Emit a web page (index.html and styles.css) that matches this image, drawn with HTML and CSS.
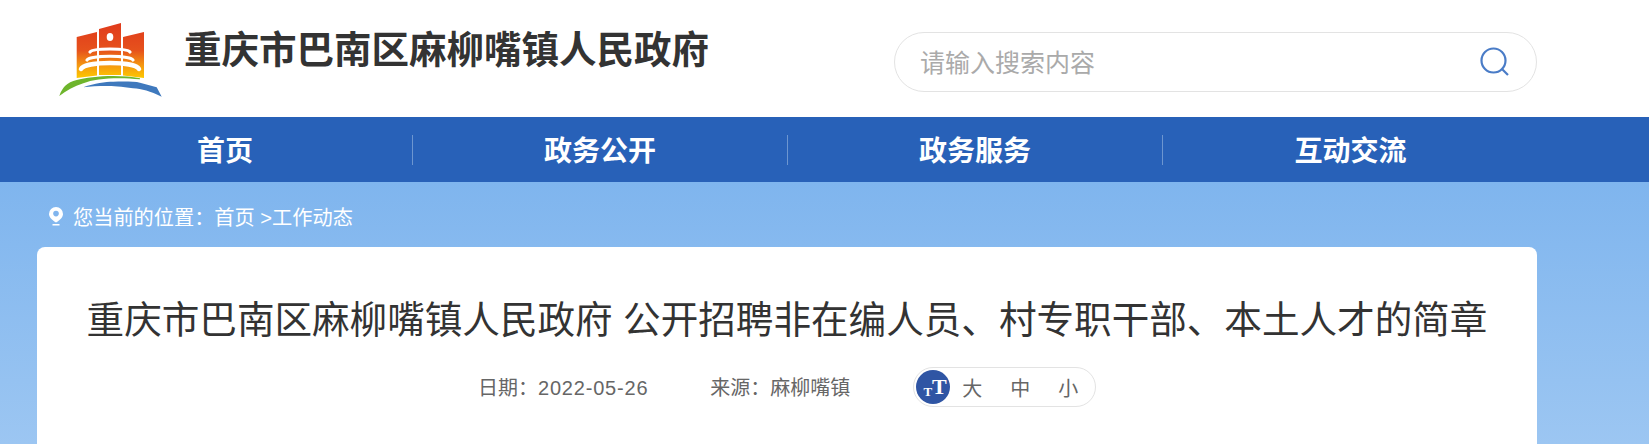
FILE: index.html
```html
<!DOCTYPE html>
<html lang="zh-CN">
<head>
  <meta charset="UTF-8">
  <title>重庆市巴南区麻柳嘴镇人民政府</title>
  <link rel="stylesheet" href="styles.css">
</head>
<body>
  <header class="header">
    <div class="brand">
      <svg class="logo" width="110" height="80" viewBox="56 20 110 80">
        <defs>
          <linearGradient id="flag" x1="0" y1="0" x2="0" y2="1">
            <stop offset="0" stop-color="#e03a1c"/>
            <stop offset="0.5" stop-color="#e6521c"/>
            <stop offset="0.78" stop-color="#f59a10"/>
            <stop offset="1" stop-color="#fdc800"/>
          </linearGradient>
        </defs>
        <path d="M76.700 37L97 32V75.500L76.700 78Z M99 29L121 23V75H99Z M123 37L144 32V78L123 75.500Z" fill="url(#flag)"/>
        <ellipse cx="110" cy="37" rx="3.300" ry="4" fill="#fff"/>
        <path d="M90 52C93 48 127 48 130 52" fill="none" stroke="#fff" stroke-width="3.200" stroke-linecap="round"/>
        <path d="M87 60C90 55 130 55 133 60" fill="none" stroke="#fff" stroke-width="3.200" stroke-linecap="round"/>
        <path d="M81 69C85 61 135 61 139 69" fill="none" stroke="#fff" stroke-width="4.500" stroke-linecap="round"/>
        <path d="M59.300 96C61 91 63 88 65 86C68 83 72 81 76.700 80C90 76 120 74 140 78.300V79.300C120 77 95 78 83.300 83.300C74 86 66 91 59.300 96Z" fill="#6eb52c"/>
        <path d="M83.300 87.300C95 83 105 81.700 113.300 81.700C125 81.500 135 81.500 140 82.700L156.700 87.300L161.700 96.700C150 91 142 89 133 88.300C122 86.500 112 86 106.700 86C98 86 90 86.500 83.300 87.300Z" fill="#3f79bd"/>
      </svg>
      <h1 class="site-name">重庆市巴南区麻柳嘴镇人民政府</h1>
    </div>
    <div class="search">
      <span class="search-hint">请输入搜索内容</span>
      <svg width="30" height="30" viewBox="0 0 30 30">
        <circle cx="13.500" cy="13.500" r="12" fill="none" stroke="#4a7cc7" stroke-width="2.200"/>
        <path d="M22 22L28 28" stroke="#4a7cc7" stroke-width="2.200"/>
      </svg>
    </div>
  </header>

  <nav class="nav">
    <a class="nav-item">首页</a>
    <a class="nav-item">政务公开</a>
    <a class="nav-item">政务服务</a>
    <a class="nav-item">互动交流</a>
  </nav>

  <main class="content">
    <div class="crumb">
      <svg width="16" height="20" viewBox="0 0 16 20">
        <path d="M8 1a7 7 0 0 1 7 7c0 3.500-3.500 6.500-7 8.500C4.500 14.500 1 11.500 1 8a7 7 0 0 1 7-7Z" fill="#fff"/>
        <circle cx="8" cy="7.600" r="2.800" fill="#80b5ee"/>
        <rect x="4.500" y="18" width="7" height="1.500" fill="#fff"/>
      </svg>
      <span>您当前的位置：首页 &gt;工作动态</span>
    </div>
    <article class="card">
      <h2 class="title">重庆市巴南区麻柳嘴镇人民政府 公开招聘非在编人员、村专职干部、本土人才的简章</h2>
      <div class="meta">
        <span class="meta-date">日期：<span class="meta-num">2022-05-26</span></span>
        <span class="meta-source">来源：麻柳嘴镇</span>
        <div class="font-size">
          <span class="font-icon">
            <svg width="34" height="34" viewBox="0 0 34 34">
              <circle cx="17" cy="17" r="17" fill="#2f55a4"/>
              <text x="7.500" y="25.500" class="font-icon-small">T</text>
              <text x="16" y="24" class="font-icon-big">T</text>
            </svg>
          </span>
          <span>大</span>
          <span>中</span>
          <span>小</span>
        </div>
      </div>
    </article>
  </main>
</body>
</html>
```

FILE: styles.css
```css
* {
  box-sizing: border-box;
}
html, body {
  height: 444px;
  overflow: hidden;
}
body {
  margin: 0;
  font-family: "Liberation Sans", "Noto Sans CJK SC", sans-serif;
  background: #fff;
}
.header {
  height: 117px;
  padding: 32px 112px 0 56px;
  display: flex;
  justify-content: space-between;
  align-items: flex-start;
}
.brand {
  display: flex;
  align-items: flex-start;
  gap: 18px;
}
.logo {
  margin-top: -12px;
}
.site-name {
  margin: -7px 0 0;
  font-size: 37.500px;
  line-height: 50px;
  font-weight: bold;
  color: #333;
}
.search {
  width: 643px;
  height: 60px;
  border: 1px solid #e3e3e3;
  border-radius: 30px;
  padding: 0 26px 0 25px;
  display: flex;
  align-items: center;
  justify-content: space-between;
}
.search-hint {
  font-size: 25px;
  line-height: 30px;
  margin-top: 2px;
  color: #aaa;
}
.nav {
  height: 65px;
  background: #2861b8;
  display: flex;
  align-items: center;
  padding: 0 38px;
}
.nav-item {
  width: 375px;
  text-align: center;
  color: #fff;
  font-size: 28px;
  font-weight: bold;
  line-height: 27px;
  padding-top: 3px;
  border-right: 1px solid #6d96d0;
}
.nav-item:last-child {
  border-right: none;
}
.content {
  height: 262px;
  padding: 0 112px 0 37px;
  background: linear-gradient(to bottom, #7fb5ee, #9cc6f2);
}
.crumb {
  height: 65px;
  padding: 3px 0 0 11px;
  display: flex;
  align-items: center;
  gap: 9px;
  color: #fff;
  font-size: 20.200px;
}
.card {
  background: #fff;
  border-radius: 8px 8px 0 0;
  height: 197px;
  padding-top: 47px;
}
.title {
  margin: 0;
  text-align: center;
  font-size: 37.600px;
  line-height: 52px;
  font-weight: normal;
  color: #333;
}
.meta {
  margin-top: 20px;
  display: flex;
  align-items: center;
  padding-left: 441px;
  font-size: 20px;
  color: #666;
}
.meta-num {
  letter-spacing: 0.800px;
}
.meta-source {
  margin-left: 62px;
}
.font-size {
  margin-left: 63px;
  margin-top: 1px;
  width: 183px;
  height: 40px;
  border: 1px solid #e3e3e3;
  border-radius: 20px;
  padding-left: 2px;
  display: flex;
  align-items: center;
  gap: 28px;
}
.font-icon {
  width: 34px;
  height: 34px;
  margin-right: -16px;
}
.font-icon-small, .font-icon-big {
  fill: #fff;
  font-family: "Liberation Serif", serif;
  font-weight: bold;
}
.font-icon-small {
  font-size: 13px;
}
.font-icon-big {
  font-size: 22px;
}
```
